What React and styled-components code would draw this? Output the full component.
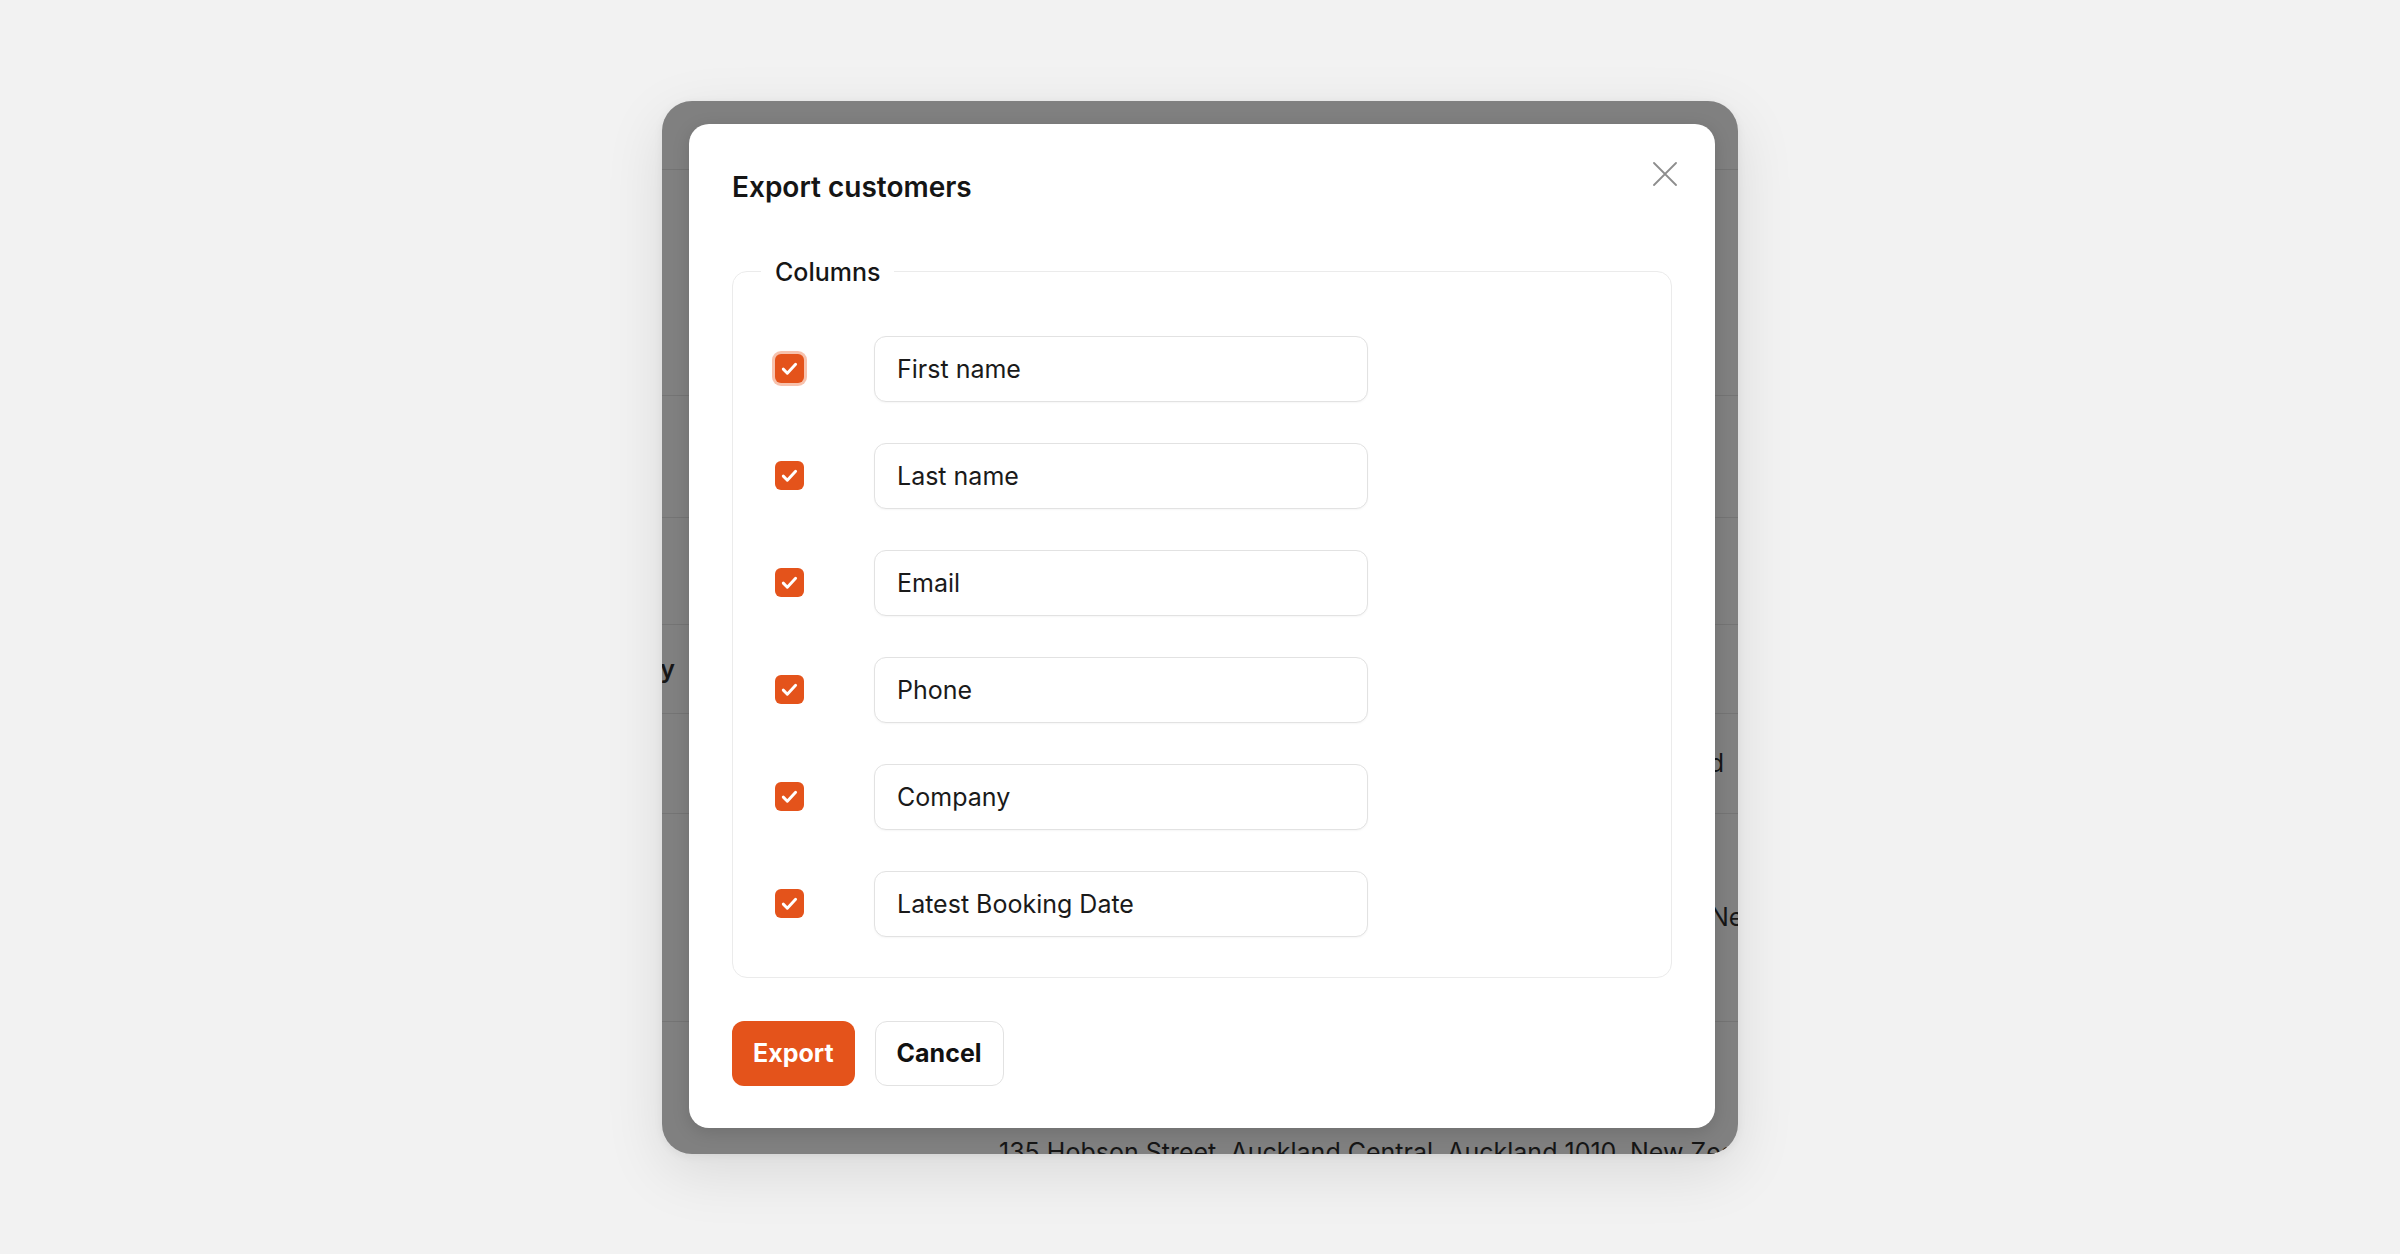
import React, { useState } from "react";
import styled, { createGlobalStyle } from "styled-components";

const GlobalStyle = createGlobalStyle`
  html, body {
    margin: 0;
    padding: 0;
    background: #f2f2f2;
    font-family: "Inter", "Noto Sans", sans-serif;
  }
  * {
    box-sizing: border-box;
  }
`;

const columnsList = [
  "First name",
  "Last name",
  "Email",
  "Phone",
  "Company",
  "Latest Booking Date",
];

// rows of the dimmed customers table behind the dialog
const backdropRows = [
  { h: 69 },
  { h: 226 },
  { h: 122 },
  { h: 107 },
  { h: 89, text: "Company", clipEnd: 13, bold: true },
  { h: 100, text: "Auckland", align: "end", pad: "0 14px 0 0" },
  { h: 208, text: "New Zealand", pad: "0 0 0 1048px" },
  {
    h: 132,
    text: "135 Hobson Street, Auckland Central, Auckland 1010, New Zealand",
    pad: "115px 0 0 337px",
    top: true,
    last: true,
  },
];

const CheckIcon = () => (
  <svg width="29" height="29" viewBox="0 0 28 28" fill="none">
    <path
      d="M8 14.6l3.9 3.9 8-8.6"
      stroke="#fff"
      strokeWidth="2.8"
      strokeLinecap="round"
      strokeLinejoin="round"
    />
  </svg>
);

const CloseIcon = () => (
  <svg width="24" height="24" viewBox="0 0 24 24" fill="none">
    <path
      d="M1 1l22 22M23 1L1 23"
      stroke="#8d8d8d"
      strokeWidth="1.8"
      strokeLinecap="round"
    />
  </svg>
);

const App = () => {
  const [checked, setChecked] = useState(columnsList.map(() => true));

  const toggle = (i) => {
    const next = [...checked];
    next[i] = !next[i];
    setChecked(next);
  };

  return (
    <Page>
      <GlobalStyle />
      <Frame>
        <Backdrop>
          {backdropRows.map((r, i) => (
            <BackRow
              key={i}
              $h={r.h}
              $align={r.align}
              $pad={r.pad}
              $top={r.top}
              $last={r.last}
            >
              {r.clipEnd ? (
                <ClipEnd $w={r.clipEnd}>
                  <BackText $bold={r.bold}>{r.text}</BackText>
                </ClipEnd>
              ) : (
                r.text && <BackText $bold={r.bold}>{r.text}</BackText>
              )}
            </BackRow>
          ))}
        </Backdrop>

        <Dialog>
          <Title>Export customers</Title>
          <CloseButton aria-label="Close">
            <CloseIcon />
          </CloseButton>

          <Columns>
            <Legend>Columns</Legend>
            <RowList>
              {columnsList.map((name, i) => (
                <Row key={name}>
                  <Check
                    role="checkbox"
                    aria-checked={checked[i]}
                    $on={checked[i]}
                    $focus={i === 0}
                    onClick={() => toggle(i)}
                  >
                    {checked[i] && <CheckIcon />}
                  </Check>
                  <NameInput defaultValue={name} />
                </Row>
              ))}
            </RowList>
          </Columns>

          <Footer>
            <Button $primary>Export</Button>
            <Button>Cancel</Button>
          </Footer>
        </Dialog>
      </Frame>
    </Page>
  );
};

const Page = styled.div`
  min-height: 100vh;
  display: flex;
  align-items: center;
  justify-content: center;
`;

const Frame = styled.div`
  width: 1076px;
  height: 1053px;
  border-radius: 30px;
  overflow: hidden;
  background: #808080;
  display: grid;
  grid-template-columns: minmax(0, 1fr);
  grid-template-rows: minmax(0, 1fr);
  box-shadow: 0 18px 60px rgba(0, 0, 0, 0.1), 0 2px 10px rgba(0, 0, 0, 0.06);
`;

const Backdrop = styled.div`
  grid-area: 1 / 1;
  min-width: 0;
  overflow: hidden;
  display: flex;
  flex-direction: column;
`;

const BackRow = styled.div`
  height: ${(p) => p.$h}px;
  flex: ${(p) => (p.$last ? "1" : "none")};
  display: flex;
  align-items: ${(p) => (p.$top ? "flex-start" : "center")};
  justify-content: ${(p) => (p.$align === "end" ? "flex-end" : "flex-start")};
  padding: ${(p) => p.$pad || "0"};
  border-bottom: ${(p) => (p.$last ? "none" : "1px solid #747474")};
  white-space: nowrap;
`;

const ClipEnd = styled.div`
  width: ${(p) => p.$w}px;
  margin-right: auto;
  display: flex;
  justify-content: flex-end;
`;

const BackText = styled.span`
  font-size: 25px;
  line-height: 30px;
  font-weight: ${(p) => (p.$bold ? 600 : 400)};
  color: #161616;
`;

const Dialog = styled.div`
  grid-area: 1 / 1;
  align-self: start;
  justify-self: start;
  position: relative;
  width: 1026px;
  margin: 23px 0 0 27px;
  padding: 46px 43px 42px;
  background: #ffffff;
  border-radius: 20px;
  box-shadow: 0 4px 18px rgba(0, 0, 0, 0.14);
`;

const Title = styled.h2`
  margin: 0;
  font-size: 28px;
  line-height: 34px;
  font-weight: 600;
  color: #151515;
`;

const CloseButton = styled.button`
  position: absolute;
  top: 30px;
  right: 30px;
  width: 40px;
  height: 40px;
  padding: 0;
  border: none;
  background: none;
  display: flex;
  align-items: center;
  justify-content: center;
  cursor: pointer;
`;

const Columns = styled.fieldset`
  margin: 53px 0 0;
  padding: 49px 0 40px 28px;
  min-width: 0;
  border: 1.5px solid #ebebeb;
  border-radius: 15px;
`;

const Legend = styled.legend`
  padding: 0 14px;
  font-size: 25px;
  line-height: 30px;
  font-weight: 500;
  color: #161616;
`;

const RowList = styled.div`
  display: flex;
  flex-direction: column;
  gap: 41px;
  padding-left: 14px;
`;

const Row = styled.div`
  display: flex;
  align-items: center;
  gap: 70px;
`;

const Check = styled.span`
  width: 29px;
  height: 29px;
  flex: none;
  border-radius: 6px;
  display: flex;
  align-items: center;
  justify-content: center;
  cursor: pointer;
  background: ${(p) => (p.$on ? "#e4531b" : "#fff")};
  border: ${(p) => (p.$on ? "none" : "1.5px solid #cfcfcf")};
  box-shadow: ${(p) =>
    p.$focus ? "0 0 0 3px rgba(238, 120, 74, 0.45)" : "none"};
`;

const NameInput = styled.input`
  width: 494px;
  height: 66px;
  padding: 0 22px;
  border: 1.5px solid #e2e2e2;
  border-radius: 12px;
  font-family: "Inter", "Noto Sans", sans-serif;
  font-size: 25px;
  color: #1a1a1a;
  background: #fff;
  box-shadow: 0 1px 2px rgba(0, 0, 0, 0.04);
  outline: none;
`;

const Footer = styled.div`
  display: flex;
  gap: 20px;
  margin-top: 43px;
`;

const Button = styled.button`
  height: 65px;
  padding: 0 21px;
  border-radius: 12px;
  font-family: "Inter", "Noto Sans", sans-serif;
  font-size: 25px;
  font-weight: 650;
  cursor: pointer;
  background: ${(p) => (p.$primary ? "#e4531b" : "#ffffff")};
  color: ${(p) => (p.$primary ? "#ffffff" : "#111111")};
  border: ${(p) => (p.$primary ? "none" : "1.5px solid #e2e2e2")};
`;

export default App;
